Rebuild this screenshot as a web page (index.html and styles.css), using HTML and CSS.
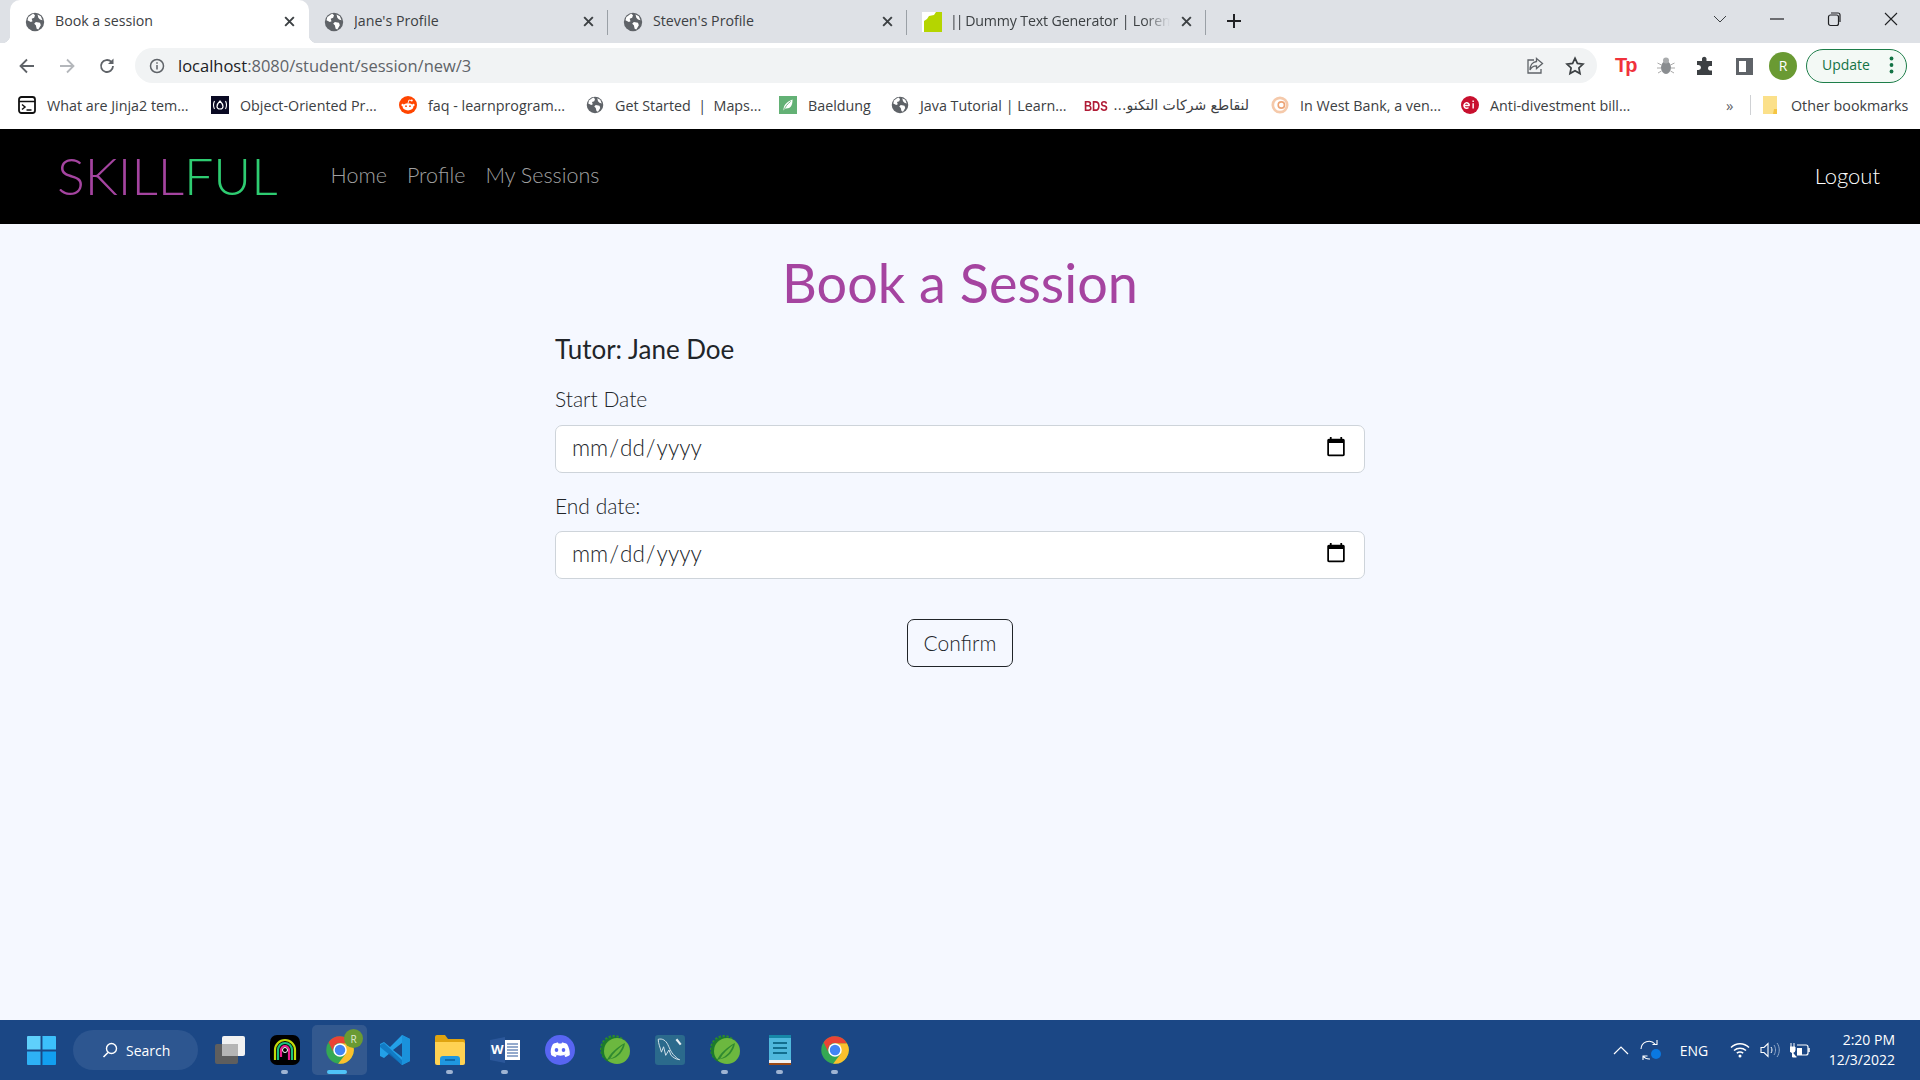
FILE: index.html
```html
<!DOCTYPE html>
<html>

<head>
    <title>Book a session</title>
    <link rel="stylesheet" href="styles.css">
</head>

<body>
    <svg class="defs" width="0" height="0">
        <symbol id="globe" viewBox="0 0 24 24">
            <circle cx="12" cy="12" r="11" fill="#5f6368" />
            <path d="M4 6c2-1 3-3 6-4l2 2-1 3-3 1 1 3-2 1-4-2zM13 12l5 1 1 3-3 5-2-1-1-4-2-2zM15 3l4 2 2 5-3-1-2-2z" fill="#fff" />
        </symbol>
        <symbol id="close" viewBox="0 0 12 12">
            <path d="M2 2l8 8M10 2l-8 8" stroke="#3c4043" stroke-width="1.8" fill="none" />
        </symbol>
        <symbol id="chrome" viewBox="0 0 24 24">
            <circle cx="12" cy="12" r="11" fill="#34a853" />
            <path d="M21.53 6.5A11 11 0 0 1 10.5 22.9L16.76 14.75 12 6.5z" fill="#fbc02d" />
            <path d="M12 1a11 11 0 0 1 9.53 5.5H12a5.5 5.5 0 0 0-4.8 8.25L2.9 5.7A11 11 0 0 1 12 1z" fill="#ea4335" />
            <circle cx="12" cy="12" r="5.4" fill="#fff" />
            <circle cx="12" cy="12" r="4.2" fill="#4285f4" />
        </symbol>
        <symbol id="spring" viewBox="0 0 30 30">
            <circle cx="14" cy="14" r="12.5" fill="none" stroke="#2a8a2e" stroke-width="3" stroke-dasharray="2.4 1.4" />
            <circle cx="14" cy="15" r="13" fill="#1c7a2c" />
            <circle cx="17" cy="16" r="13" fill="#6cb83f" />
            <path d="M6 27c4-9 11-15 19-19-1 8-7 15-14 16-2 .3-4 1-5 3z" fill="#1c7a2c" opacity=".75" />
            <path d="M10 24c3-6 8-10 13-14-2 6-6 11-13 14z" fill="#6cb83f" />
        </symbol>
    </svg>

    <div class="tabstrip">
        <div class="tab active">
            <svg class="fav"><use href="#globe" /></svg>
            <span class="tab-title">Book a session</span>
            <svg class="tab-x"><use href="#close" /></svg>
        </div>
        <div class="tab sep">
            <svg class="fav"><use href="#globe" /></svg>
            <span class="tab-title">Jane's Profile</span>
            <svg class="tab-x"><use href="#close" /></svg>
        </div>
        <div class="tab sep">
            <svg class="fav"><use href="#globe" /></svg>
            <span class="tab-title">Steven's Profile</span>
            <svg class="tab-x"><use href="#close" /></svg>
        </div>
        <div class="tab sep">
            <svg class="fav" viewBox="0 0 20 20"><path d="M0 0h20v20H0z" fill="#fff" /><path d="M2 20V9l3-2 2-3 5-1 2-3h6v20z" fill="#b5d500" /></svg>
            <span class="tab-title fade"><span class="pipes">||</span> Dummy Text Generator | Lorem</span>
            <svg class="tab-x"><use href="#close" /></svg>
        </div>
        <svg class="new-tab" viewBox="0 0 16 16"><path d="M8 1v14M1 8h14" stroke="#202124" stroke-width="2" fill="none" /></svg>
        <div class="win-buttons">
            <svg class="win-btn" viewBox="0 0 16 16"><path d="M2 5l6 6 6-6" stroke="#3c4043" fill="none" /></svg>
            <svg class="win-btn" viewBox="0 0 16 16"><path d="M1 8h14" stroke="#202124" fill="none" stroke-width="1.2" /></svg>
            <svg class="win-btn" viewBox="0 0 16 16"><rect x="2.5" y="4" width="10" height="10.5" rx="2" stroke="#202124" fill="none" stroke-width="1.2" /><path d="M5 2h7a2 2 0 0 1 2 2v7" stroke="#202124" fill="none" stroke-width="1.2" /></svg>
            <svg class="win-btn" viewBox="0 0 16 16"><path d="M2 2l12 12M14 2L2 14" stroke="#202124" fill="none" stroke-width="1.1" /></svg>
        </div>
    </div>

    <div class="toolbar">
        <svg class="nav-btn first" viewBox="0 0 20 20"><path d="M17 10H4M10 3.500L3.500 10l6.500 6.500" stroke="#5f6368" stroke-width="1.8" fill="none" /></svg>
        <svg class="nav-btn" viewBox="0 0 20 20"><path d="M3 10h13M10 3.500l6.500 6.500-6.500 6.500" stroke="#b4b7bb" stroke-width="1.800" fill="none" /></svg>
        <svg class="nav-btn" viewBox="0 0 20 20"><path d="M16 10a6 6 0 1 1-1.800-4.300" stroke="#5f6368" stroke-width="1.800" fill="none" /><path d="M16.500 2.500v5.500h-5.500z" fill="#5f6368" /></svg>
        <div class="omnibox">
            <svg class="info" viewBox="0 0 16 16"><circle cx="8" cy="8" r="6.500" stroke="#5f6368" stroke-width="1.500" fill="none" /><path d="M8 7v4.500M8 4.200v1.600" stroke="#5f6368" stroke-width="1.500" /></svg>
            <span class="url"><b>localhost</b>:8080/student/session/new/3</span>
            <svg class="omni-icon" viewBox="0 0 20 20"><path d="M9 4H3v13h13v-4" stroke="#5f6368" stroke-width="1.300" fill="none" /><path d="M11.500 2.500l6 5-6 5V9.800C8 9.800 6 11.500 5 14c0-4.500 2.500-8 6.500-8.500z" stroke="#5f6368" stroke-width="1.300" fill="none" /></svg>
            <svg class="omni-icon star" viewBox="0 0 20 20"><path d="M10 2.200l2.400 5.200 5.600.7-4.100 3.900 1.100 5.600-5-2.800-5 2.800 1.100-5.600L2 8.100l5.600-.7z" stroke="#3c4043" stroke-width="1.700" fill="none" /></svg>
        </div>
        <span class="ext-tp">Tp</span>
        <svg class="ext" viewBox="0 0 20 20"><ellipse cx="10" cy="11.500" rx="5" ry="6.500" fill="#8a8d90" /><circle cx="10" cy="4.500" r="3" fill="#a9abad" /><path d="M1.500 7l4 2M1 12h4M2 17l3.500-2M18.500 7l-4 2M19 12h-4M18 17l-3.500-2" stroke="#aaa" /></svg>
        <svg class="ext" viewBox="0 0 20 20"><path d="M7 2.500a2.300 2.300 0 0 1 4.500 0V5H17v5h-2.300a2.400 2.400 0 0 0 0 4.600H17V19H2v-5h1.500a2.500 2.500 0 0 0 0-5H2V5h5z" fill="#3c4043" /></svg>
        <svg class="ext" viewBox="0 0 20 20"><path d="M2 2h17v17H2z" fill="#5f6368" /><path d="M5 5h7v11H5z" fill="#fff" /></svg>
        <span class="avatar">R</span>
        <div class="update">
            <span>Update</span>
            <svg class="dots" viewBox="0 0 4 18"><circle cx="2" cy="2.500" r="1.900" /><circle cx="2" cy="9" r="1.900" /><circle cx="2" cy="15.500" r="1.900" /></svg>
        </div>
    </div>

    <div class="bookmarks">
        <div class="bm">
            <svg class="bm-icon" viewBox="0 0 18 18"><rect x="1" y="1" width="16" height="16" rx="2.500" fill="#fff" stroke="#111" stroke-width="1.800" /><path d="M1 5.500h16" stroke="#111" stroke-width="1.500" /><path d="M4 8.500l3 2.500-3 2.500M8.500 14h5" stroke="#111" stroke-width="1.500" fill="none" /></svg>
            <span>What are Jinja2 tem...</span>
        </div>
        <div class="bm">
            <svg class="bm-icon" viewBox="0 0 18 18"><path d="M0 0h20v20H0z" fill="#0a0a23" /><path d="M9 5c2 2 3 3.500 3 5.500 0 1.500-1 2.500-3 2.500s-3-1-3-2.500C6 8.500 7 7 9 5z" stroke="#fff" stroke-width="1.200" fill="none" /><path d="M3.500 5C2 8 2 10 3.500 13M14.500 5c1.500 3 1.500 5 0 8" stroke="#fff" stroke-width="1.100" fill="none" /></svg>
            <span>Object-Oriented Pr...</span>
        </div>
        <div class="bm">
            <svg class="bm-icon" viewBox="0 0 20 20"><circle cx="10" cy="10" r="10" fill="#ff4500" /><ellipse cx="10" cy="12" rx="6" ry="4" fill="#fff" /><circle cx="7.800" cy="11.300" r="1" fill="#ff4500" /><circle cx="12.200" cy="11.300" r="1" fill="#ff4500" /><circle cx="4" cy="10" r="1.300" fill="#fff" /><circle cx="16" cy="10" r="1.300" fill="#fff" /><path d="M10 8l1-3.500 3 .6" stroke="#fff" fill="none" /><circle cx="14.200" cy="5" r="1.100" fill="#fff" /></svg>
            <span>faq - learnprogram...</span>
        </div>
        <div class="bm">
            <svg class="bm-icon"><use href="#globe" /></svg>
            <span>Get Started &nbsp;|&nbsp; Maps...</span>
        </div>
        <div class="bm">
            <svg class="bm-icon" viewBox="0 0 20 20"><path d="M0 0h20v20H0z" fill="#63b175" /><path d="M5 16c0-6 3-9 10-12 0 7-2 10-7 10-1 0-2 1-3 2z" fill="#fff" /><path d="M6 15c1-3 3-6 7-9" stroke="#63b175" fill="none" /></svg>
            <span>Baeldung</span>
        </div>
        <div class="bm">
            <svg class="bm-icon"><use href="#globe" /></svg>
            <span>Java Tutorial | Learn...</span>
        </div>
        <div class="bm">
            <span class="bds">BDS</span>
            <span dir="rtl" class="arabic">لنقاطع شركات التكنو...</span>
        </div>
        <div class="bm">
            <svg class="bm-icon" viewBox="0 0 20 20"><circle cx="10" cy="10" r="8" fill="none" stroke="#f5c9aa" stroke-width="3" /><circle cx="11.500" cy="10" r="3.500" fill="none" stroke="#eda577" stroke-width="1.800" /></svg>
            <span>In West Bank, a ven...</span>
        </div>
        <div class="bm">
            <svg class="bm-icon" viewBox="0 0 20 20"><circle cx="10" cy="10" r="10" fill="#c8102e" /><path d="M3.500 10.500h6M9.300 10.500a3 3 0 1 0-1 2.300M13.500 8v6M13.500 5v1.600" stroke="#fff" stroke-width="1.600" fill="none" /></svg>
            <span>Anti-divestment bill...</span>
        </div>
        <span class="bm-more">»</span>
        <div class="bm-other">
            <svg class="bm-icon folder" viewBox="0 0 16 20"><path d="M1 1h9l5 0v18H1z" fill="#fbe08a" /><path d="M12 14h3v5h-4z" fill="#f5c542" /></svg>
            <span>Other bookmarks</span>
        </div>
    </div>

    <nav class="navbar">
        <a class="brand"><span class="brand-a">SKILL</span><span class="brand-b">FUL</span></a>
        <ul class="nav-links">
            <li>Home</li>
            <li>Profile</li>
            <li>My Sessions</li>
        </ul>
        <a class="logout">Logout</a>
    </nav>

    <main class="page">
        <h1>Book a Session</h1>
        <form class="session-form">
            <h2>Tutor: Jane Doe</h2>
            <div class="form-group">
                <label for="start">Start Date</label>
                <input type="date" id="start">
            </div>
            <div class="form-group">
                <label for="end">End date:</label>
                <input type="date" id="end">
            </div>
            <div class="form-actions">
                <button type="button">Confirm</button>
            </div>
        </form>
    </main>

    <footer class="taskbar">
        <svg class="start" viewBox="0 0 30 30">
            <path d="M0 1a1 1 0 0 1 1-1h13v14H0z" fill="#5fd0fb" />
            <path d="M16 0h13a1 1 0 0 1 1 1v13H16z" fill="#3cc0fb" />
            <path d="M0 16h14v14H1a1 1 0 0 1-1-1z" fill="#2eb1f5" />
            <path d="M16 16h14v13a1 1 0 0 1-1 1H16z" fill="#129ff0" />
        </svg>
        <div class="search">
            <svg viewBox="0 0 16 16"><circle cx="9.500" cy="6.500" r="5" stroke="#fff" stroke-width="1.400" fill="none" /><path d="M6 10.500L1.500 15" stroke="#fff" stroke-width="1.600" /></svg>
            <span>Search</span>
        </div>
        <div class="apps">
            <div class="app">
                <svg viewBox="0 0 30 30"><rect y="9" width="23" height="20" rx="2" fill="#5e5e5e" /><rect x="7" y="1" width="23" height="20" rx="2" fill="#f2f2f2" /><rect x="7" y="9" width="16" height="12" fill="#b5b5b5" /></svg>
            </div>
            <div class="app running">
                <svg viewBox="0 0 30 30"><rect width="30" height="30" rx="7" fill="#000" /><path d="M5 25V15a10 10 0 0 1 20 0v10" fill="none" stroke="#c3dc0a" stroke-width="2.200" /><path d="M8 25V15a7 7 0 0 1 14 0v10" fill="none" stroke="#19c37d" stroke-width="2.200" /><path d="M11 22V15a4 4 0 0 1 8 0v10" fill="none" stroke="#e91e8c" stroke-width="2.200" /><circle cx="15" cy="15" r="2.500" fill="none" stroke="#fff" stroke-width="1" /></svg>
            </div>
            <div class="app running current">
                <svg viewBox="0 0 24 24"><use href="#chrome" /></svg>
                <span class="profile-badge">R</span>
            </div>
            <div class="app">
                <svg viewBox="0 0 30 30"><path d="M22 0l8 4v22l-8 4-12-12-6 5-4-2v-12l4-2 6 5z" fill="#23a0e8" /><path d="M22 8l-9 7 9 7z" fill="#1b4785" /><path d="M0 10l4-2 18 17v5L0 12z" fill="#0e72bb" opacity=".8" /><path d="M22 0l8 4v22l-8 4z" fill="#1a92dc" /></svg>
            </div>
            <div class="app running">
                <svg viewBox="0 0 30 30"><path d="M0 2a2 2 0 0 1 2-2h8l3 4h15a2 2 0 0 1 2 2v4H0z" fill="#e0a410" /><path d="M0 7h28a2 2 0 0 1 2 2v19a2 2 0 0 1-2 2H2a2 2 0 0 1-2-2z" fill="#ffd253" /><path d="M5 30v-6a3 3 0 0 1 3-3h14a3 3 0 0 1 3 3v6z" fill="#1f97e0" /><path d="M10 25h10" stroke="#0b5c9a" stroke-width="1.500" /></svg>
            </div>
            <div class="app running">
                <svg class="word" viewBox="0 0 30 26"><path d="M0 3l15-3v26l-15-3z" fill="#2b579a" /><path d="M15 3h15v20H15z" fill="#fff" /><path d="M17 7h11M17 10h11M17 13h11M17 16h11M17 19h11" stroke="#2b579a" /></svg>
                <span class="word-w">W</span>
            </div>
            <div class="app">
                <svg viewBox="0 0 30 30"><circle cx="15" cy="15" r="15" fill="#5865f2" /><path d="M8 9c2-1 4-1.500 5-1.500l.5 1h3l.5-1c1 0 3 .5 5 1.500 2 3 3 7 2.800 11-1.500 1.200-3 1.800-4.500 2l-1-1.700c.6-.2 1.200-.5 1.600-.8-3.500 1.500-7.300 1.500-10.800 0 .4.300 1 .6 1.600.8l-1 1.700c-1.500-.2-3-.8-4.500-2C5 16 6 12 8 9z" fill="#fff" /><ellipse cx="11.500" cy="15" rx="1.800" ry="2" fill="#5865f2" /><ellipse cx="18.500" cy="15" rx="1.800" ry="2" fill="#5865f2" /></svg>
            </div>
            <div class="app">
                <svg viewBox="0 0 30 30"><use href="#spring" /></svg>
            </div>
            <div class="app">
                <svg viewBox="0 0 28 28"><rect width="28" height="28" rx="3" fill="#2b6a8c" /><path d="M3 4c4-1 7 1 9 5 2 4 3 8 8 12 1 1 2 2 3 2-3 0-6-2-8-4l-2-5-3 5-2-8-2 5c-1-4-3-8-3-12z" fill="none" stroke="#d6e4ec" stroke-width=".9" /><path d="M20 4l4 5" stroke="#e8f0f4" stroke-width="2" /></svg>
            </div>
            <div class="app running">
                <svg viewBox="0 0 30 30"><use href="#spring" /></svg>
            </div>
            <div class="app running">
                <svg class="notepad" viewBox="0 0 22 30"><path d="M0 2h22v26H0z" fill="#4fb8dc" /><path d="M0 0h22v3H0z" fill="#1687a7" /><path d="M0 25h22v3H0z" fill="#f2f2f2" /><path d="M0 28h22v2H0z" fill="#9c4a16" /><path d="M4 8h14M4 13h14M4 18h14" stroke="#126e8e" stroke-width="2" /></svg>
            </div>
            <div class="app running">
                <svg viewBox="0 0 24 24"><use href="#chrome" /></svg>
            </div>
        </div>
        <div class="tray">
            <svg class="tray-chevron" viewBox="0 0 16 10"><path d="M1 9l7-7 7 7" stroke="#fff" stroke-width="1.200" fill="none" /></svg>
            <svg class="tray-sync" viewBox="0 0 22 22"><path d="M1 10a8 8 0 0 1 14-5M17 1v4.500h-4.500M3 21v-4h4.500M3 17a8 8 0 0 0 7 3" stroke="#fff" stroke-width="1.100" fill="none" /><circle cx="16" cy="15" r="5" fill="#0a78e0" /></svg>
            <span class="lang">ENG</span>
            <svg class="tray-icon" viewBox="0 0 20 16"><path d="M1 5.500c5-5 13-5 18 0M4 8.500c3.500-3 8.500-3 12 0M6.800 11.200c2-1.500 4.400-1.500 6.400 0" stroke="#fff" stroke-width="1.500" fill="none" /><circle cx="10" cy="14" r="1.500" fill="#fff" /></svg>
            <svg class="tray-icon" viewBox="0 0 20 16"><path d="M1 5.500h3l4-4v13l-4-4H1z" stroke="#fff" stroke-width="1.100" fill="none" /><path d="M11 5c1.300 2 1.300 4 0 6" stroke="#fff" fill="none" /><path d="M14 3c2 3 2 7 0 10M17 1c3 4 3 10 0 14" stroke="#8ea6c7" fill="none" /></svg>
            <svg class="tray-icon" viewBox="0 0 20 16"><path d="M7 3h9a2 2 0 0 1 2 2v6a2 2 0 0 1-2 2H7" stroke="#fff" stroke-width="1.200" fill="none" /><path d="M19 6v4" stroke="#fff" stroke-width="1.500" /><path d="M7 6h5v7H7z" fill="#fff" /><path d="M1 5V1M4 5V1M0 5h5v3a2 2 0 0 1-5 0zM2.500 10v5h4" stroke="#fff" fill="#fff" stroke-width="1" /></svg>
            <div class="clock">
                <span>2:20 PM</span>
                <span>12/3/2022</span>
            </div>
        </div>
    </footer>
</body>

</html>
```

FILE: styles.css
```css
* {
    box-sizing: border-box;
}

body {
    margin: 0;
    height: 100vh;
    overflow: hidden;
    display: flex;
    flex-direction: column;
    font-family: "Open Sans", sans-serif;
    background: #f5f8ff;
}

.defs {
    position: absolute;
}

/* browser chrome */
.tabstrip {
    height: 43px;
    background: #dee1e6;
    display: flex;
    align-items: stretch;
    padding: 0 0 0 10px;
    flex: none;
}

.tab {
    width: 299px;
    display: flex;
    align-items: center;
    padding: 0 13px 0 15px;
    font-size: 14.2px;
    color: #3c4043;
    position: relative;
}

.tab.active {
    background: #fff;
    border-radius: 10px 10px 0 0;
}

.tab.active::before,
.tab.active::after {
    content: "";
    position: absolute;
    bottom: 0;
    width: 8px;
    height: 8px;
}

.tab.active::before {
    left: -8px;
    background: radial-gradient(circle at 0 0, transparent 8px, #fff 8.500px);
}

.tab.active::after {
    right: -8px;
    background: radial-gradient(circle at 100% 0, transparent 8px, #fff 8.500px);
}

.tab.sep::after {
    content: "";
    position: absolute;
    right: 0;
    top: 10px;
    height: 25px;
    width: 1px;
    background: #9aa0a6;
}

.fav {
    width: 20px;
    height: 20px;
    flex: none;
}

.tab-title {
    margin: 0 0 3px 10px;
    flex: 1;
    white-space: nowrap;
    overflow: hidden;
}

.pipes {
    letter-spacing: -2px;
}

.fade {
    margin-left: 8px;
    letter-spacing: -.15px;
    -webkit-mask-image: linear-gradient(to right, #000 88%, transparent);
    mask-image: linear-gradient(to right, #000 88%, transparent);
}

.tab-x {
    width: 13px;
    height: 13px;
    margin-left: 10px;
    flex: none;
}

.new-tab {
    width: 16px;
    height: 16px;
    margin: 13px 0 0 20px;
}

.win-buttons {
    margin-left: auto;
    display: flex;
    gap: 41px;
    padding: 11px 21px 0 0;
}

.win-btn {
    width: 16px;
    height: 16px;
}

.toolbar {
    height: 40px;
    background: #fff;
    display: flex;
    align-items: center;
    padding-top: 5px;
    flex: none;
}

.nav-btn {
    width: 20px;
    height: 20px;
    margin-left: 20px;
}

.nav-btn.first {
    margin-left: 17px;
}

.omnibox {
    width: 1462px;
    height: 35px;
    margin-left: 18px;
    background: #f1f3f4;
    border-radius: 18px;
    display: flex;
    align-items: center;
    padding: 0 12px 0 14px;
}

.info {
    width: 16px;
    height: 16px;
}

.url {
    margin-left: 13px;
    font-size: 16.5px;
    color: #5f6368;
    flex: 1;
}

.url b {
    font-weight: 400;
    color: #202124;
}

.omni-icon {
    width: 20px;
    height: 20px;
}

.star {
    margin-left: 20px;
}

.ext-tp {
    margin-left: 18px;
    width: 22px;
    font-family: "Liberation Sans", sans-serif;
    font-weight: 700;
    font-size: 20px;
    letter-spacing: -2px;
    color: #f0323c;
}

.ext {
    width: 20px;
    height: 20px;
    margin-left: 19px;
}

.avatar {
    width: 28px;
    height: 28px;
    margin-left: 15px;
    border-radius: 50%;
    background: #6a9a33;
    color: #fff;
    font-size: 14px;
    display: flex;
    align-items: center;
    justify-content: center;
}

.update {
    width: 101px;
    height: 34px;
    margin-left: 9px;
    border: 1px solid #1e7e4a;
    border-radius: 17px;
    background: #f3f9f5;
    display: flex;
    align-items: center;
    justify-content: space-between;
    padding: 0 12px 2px 15px;
    color: #137345;
    font-size: 14px;
}

.dots {
    width: 5px;
    height: 18px;
    fill: #137345;
}

.bookmarks {
    height: 46px;
    background: #fff;
    display: grid;
    grid-template-columns: 193px 188px 187px 193px 112px 183px 197px 190px 265px 20px auto;
    align-items: center;
    padding: 0 0 2px 18px;
    font-size: 14.300px;
    color: #3c4043;
    flex: none;
}

.bm {
    display: flex;
    align-items: center;
    gap: 11px;
    white-space: nowrap;
}

.bm-icon {
    width: 18px;
    height: 18px;
    flex: none;
}

.bds {
    width: 20px;
    margin-left: 10px;
    font-family: "Liberation Sans", sans-serif;
    font-weight: 700;
    font-size: 15px;
    transform: scaleX(.75);
    transform-origin: left;
    color: #b01c36;
}

.arabic {
    width: 134px;
    font-family: "DejaVu Sans", sans-serif;
    font-size: 14px;
}

.bm-more {
    font-size: 15px;
    color: #5f6368;
}

.bm-other {
    display: flex;
    align-items: center;
    gap: 13px;
    margin-left: 4px;
    padding-left: 11px;
    border-left: 1px solid #cfd1d4;
    white-space: nowrap;
}

.folder {
    width: 16px;
    height: 20px;
}

/* site navbar */
.navbar {
    height: 95px;
    background: #000;
    display: flex;
    align-items: center;
    padding: 0 40px 3px 57px;
    flex: none;
}

.brand {
    font-family: "Lato", sans-serif;
    font-weight: 300;
    font-size: 52px;
    line-height: 1;
}

.brand-a {
    color: #a544a0;
}

.brand-b {
    color: #2ecc71;
}

.nav-links {
    list-style: none;
    margin: 0 0 0 53px;
    padding: 0;
    display: flex;
    gap: 20px;
    font-family: "Lato", sans-serif;
    font-weight: 300;
    font-size: 21.500px;
    color: #a0a0a0;
}

.logout {
    margin-left: auto;
    font-family: "Lato", sans-serif;
    font-weight: 300;
    font-size: 22px;
    color: #fff;
}

/* page */
.page {
    flex: 1;
    display: flex;
    flex-direction: column;
    align-items: center;
    font-family: "Lato", sans-serif;
}

h1 {
    margin: 27px 0 0;
    font-weight: 400;
    font-size: 54px;
    line-height: 64px;
    color: #a544a0;
}

.session-form {
    width: 810px;
}

h2 {
    margin: 18px 0 0;
    font-weight: 400;
    font-size: 26px;
    line-height: 32px;
    color: #212529;
}

.form-group {
    margin-top: 22px;
}

.form-group + .form-group {
    margin-top: 21px;
}

label {
    display: block;
    font-weight: 300;
    font-size: 21px;
    line-height: 24px;
    margin-bottom: 13.500px;
    color: #212529;
}

input {
    display: block;
    width: 100%;
    height: 48px;
    padding: 0 15px 3px;
    border: 1px solid #ced4da;
    border-radius: 7px;
    background: #fff;
    font-family: "Lato", sans-serif;
    font-weight: 300;
    font-size: 22.500px;
    color: #212529;
}

.form-actions {
    display: flex;
    justify-content: center;
    margin-top: 40px;
}

button {
    width: 106px;
    height: 48px;
    padding: 0 0 2px;
    border: 1px solid #212529;
    border-radius: 7px;
    background: transparent;
    font-family: "Lato", sans-serif;
    font-weight: 300;
    font-size: 21px;
    color: #212529;
}

/* windows taskbar */
.taskbar {
    height: 60px;
    background: #1b4785;
    display: flex;
    align-items: center;
    padding-left: 27px;
    flex: none;
    color: #fff;
}

.start {
    width: 29px;
    height: 29px;
}

.search {
    width: 125px;
    height: 40px;
    margin-left: 17px;
    border-radius: 20px;
    background: #2d5690;
    display: flex;
    align-items: center;
    gap: 8px;
    padding-left: 29px;
    font-size: 14px;
}

.search svg {
    width: 16px;
    height: 16px;
}

.apps {
    display: flex;
    margin-left: 4px;
}

.app {
    width: 55px;
    height: 50px;
    display: flex;
    align-items: center;
    justify-content: center;
    position: relative;
    border-radius: 5px;
}

.app svg {
    width: 30px;
    height: 30px;
}

.app svg.word {
    height: 26px;
}

.app svg.notepad {
    width: 22px;
}

.running::after {
    content: "";
    position: absolute;
    left: 24px;
    bottom: 1px;
    width: 7px;
    height: 4px;
    border-radius: 2px;
    background: #9fb4d3;
}

.current {
    background: #33598f;
}

.current::after {
    left: 15px;
    width: 20px;
    background: #4fc3f7;
}

.profile-badge {
    position: absolute;
    top: 4px;
    right: 4px;
    width: 19px;
    height: 19px;
    border-radius: 50%;
    background: #6a9a33;
    font-size: 10px;
    display: flex;
    align-items: center;
    justify-content: center;
    color: #dfe9d0;
}

.word-w {
    position: absolute;
    left: 14px;
    top: 15px;
    font-size: 13px;
    font-weight: 700;
}

.tray {
    margin-left: auto;
    display: flex;
    align-items: center;
    padding-right: 25px;
}

.tray-chevron {
    width: 16px;
    height: 10px;
}

.tray-sync {
    width: 22px;
    height: 22px;
    margin-left: 11px;
}

.lang {
    margin-left: 18px;
    width: 40px;
    font-size: 14px;
}

.tray-icon {
    width: 20px;
    height: 16px;
    margin-left: 10px;
}

.clock {
    margin-left: 19px;
    display: flex;
    flex-direction: column;
    align-items: flex-end;
    font-size: 14px;
    line-height: 20px;
}
```
